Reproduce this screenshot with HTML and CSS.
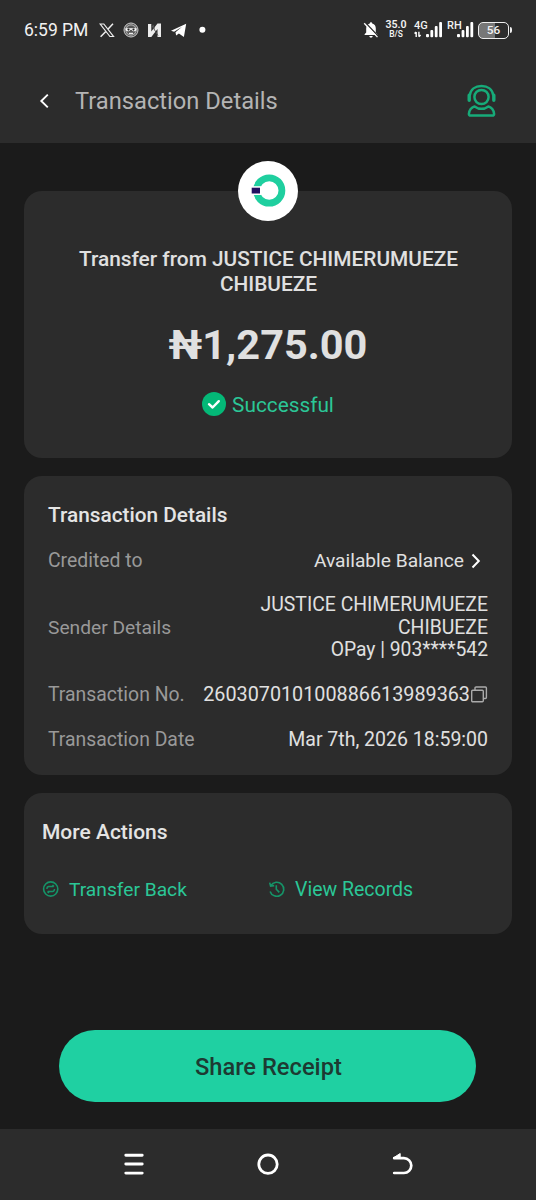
FILE: index.html
```html
<!DOCTYPE html>
<html lang="en">
<head>
<meta charset="utf-8">
<title>Transaction Details</title>
<link rel="stylesheet" href="styles.css">
</head>
<body>
<div class="screen">
  <div class="status">
    <span class="clock">6:59 PM</span>
    <svg class="status-icons" width="110" height="20" viewBox="0 0 110 20">
      <g fill="none" stroke="#eee" stroke-width="1.2">
        <path d="M1.2 4H4.8L14.5 16.5H10.9Z"/>
        <path d="M14 3.8L8.9 9.2M6.8 11.4L1.6 16.8" stroke-width="1.5"/>
      </g>
      <circle cx="32" cy="10" r="7" fill="#555" stroke="#ccc" stroke-width="1"/>
      <circle cx="32" cy="10" r="5.2" fill="none" stroke="#aaa" stroke-width="1.2"/>
      <path d="M26.5 8.2H37.5V9.2C37.5 11.5 33.5 12.2 32.7 9.7H31.3C30.5 12.2 26.5 11.5 26.5 9.2Z" fill="#fff"/>
      <circle cx="29.5" cy="9.6" r="1.1" fill="#222"/><circle cx="34.5" cy="9.6" r="1.1" fill="#222"/>
      <path d="M30 13.4H34" stroke="#eee" stroke-width="1.3"/>
      <path d="M49 4H52.3V11.5L58.5 3.5H62V17H58.5V9L52.3 17H49Z" fill="#ececec"/>
      <path d="M52.5 5L59 15.5M54 4.8L55.5 8.5" stroke="#555" stroke-width="1"/>
      <path d="M72 10.8L87.2 3.7L84.9 17L79.9 13.6L77.1 15.6L76.5 12.2L83.1 6.8L75.1 11.8Z" fill="#fff"/>
      <circle cx="103.4" cy="9.8" r="3" fill="#fff"/>
    </svg>
    <svg class="bell" width="16" height="18" viewBox="0 0 16 18">
      <path d="M8 1.2C8.8 1.2 9.2 1.8 9.2 2.6C11.7 3.3 12.8 5.2 12.8 7.6V11.5L14.4 13.2V14H1.6V13.2L3.2 11.5V7.6C3.2 5.2 4.3 3.3 6.8 2.6C6.8 1.8 7.2 1.2 8 1.2Z" fill="#fff"/>
      <path d="M6.3 15H9.7C9.5 17.2 6.5 17.2 6.3 15Z" fill="#fff"/>
      <path d="M2.2 1.4L15.3 15.2" stroke="#2c2c2c" stroke-width="1.4"/>
      <path d="M1.2 2.2L14.5 16.1" stroke="#fff" stroke-width="1.3"/>
    </svg>
    <div class="speed"><b>35.0</b><i>B/S</i></div>
    <div class="sim sim-a"><span>4G</span>
      <svg width="29" height="18" viewBox="0 0 29 18"><g fill="#fff"><rect x="12" y="13" width="3" height="3.2" rx="1"/><rect x="16.4" y="9" width="2.8" height="7.2" rx="1"/><rect x="20.8" y="5" width="2.8" height="11.2" rx="1"/><rect x="25.2" y="1" width="2.8" height="15.2" rx="1"/></g><path d="M2.2 16V11M.5 12.6L2.2 10.9M4.9 10.8V15.8M4.9 15.8L6.6 14.1" stroke="#fff" stroke-width="1.4" fill="none"/></svg>
    </div>
    <div class="sim sim-b"><span>RH</span>
      <svg width="29" height="18" viewBox="0 0 29 18"><g fill="#fff"><rect x="10" y="13" width="3" height="3.2" rx="1"/><rect x="14.6" y="9" width="2.8" height="7.2" rx="1"/><rect x="19" y="5" width="2.8" height="11.2" rx="1"/><rect x="23.4" y="1" width="2.8" height="15.2" rx="1"/></g></svg>
    </div>
    <div class="battery"><span>56</span></div>
    <div class="battery-tip"></div>
  </div>

  <header class="header">
    <svg class="back" width="10" height="16" viewBox="0 0 10 16"><path d="M8.8 1.6L2.3 8L8.8 14.4" fill="none" stroke="#fff" stroke-width="1.9"/></svg>
    <h1>Transaction Details</h1>
    <svg class="support" width="30" height="34" viewBox="0 0 30 34" fill="none" stroke="#17ab79" stroke-width="2.5">
      <circle cx="14.5" cy="13" r="7.1"/>
      <path d="M2.7 11.5C3.5 5.5 8.3 2 14.5 2S25.5 5.5 26.3 11.5"/>
      <path d="M2.2 11.2V16.2M26.8 11.2V16.2" stroke-width="3.4" stroke-linecap="round"/>
      <path d="M7.6 22.4C12 25.5 17 25.5 21.4 22.4C25.3 23.6 26.7 26.5 27.1 29.8C27.2 31 26.5 31.6 25.5 31.6H3.5C2.5 31.6 1.8 31 1.9 29.8C2.3 26.5 3.7 23.6 7.6 22.4Z" stroke-linejoin="round"/>
    </svg>
  </header>

  <main class="content">
    <section class="card summary">
      <div class="logo">
        <svg width="60" height="60" viewBox="0 0 60 60"><circle cx="31.2" cy="29.5" r="12.7" fill="none" stroke="#1fcf9f" stroke-width="6.8"/><path d="M12 25.2H23.2V34H12Z" fill="#fff"/><rect x="13.7" y="26.7" width="8.3" height="5.8" fill="#210f60"/></svg>
      </div>
      <p class="from">Transfer from JUSTICE CHIMERUMUEZE CHIBUEZE</p>
      <p class="amount">₦1,275.00</p>
      <p class="state"><svg width="24" height="24" viewBox="0 0 24 24"><circle cx="12" cy="12" r="12" fill="#04b877"/><path d="M7 12.2L10.6 15.5L16.8 9.2" fill="none" stroke="#fff" stroke-width="2.4" stroke-linecap="round" stroke-linejoin="round"/></svg><span>Successful</span></p>
    </section>

    <section class="card details">
      <h2>Transaction Details</h2>
      <dl>
        <div class="row"><dt>Credited to</dt><dd class="credited">Available Balance<svg width="10" height="16" viewBox="0 0 10 16"><path d="M1.5 1.5L7.8 8L1.5 14.5" fill="none" stroke="#fff" stroke-width="2"/></svg></dd></div>
        <div class="row"><dt class="sender">Sender Details</dt><dd>JUSTICE CHIMERUMUEZE<br>CHIBUEZE<br><span class="account">OPay | 903****542</span></dd></div>
        <div class="row"><dt>Transaction No.</dt><dd class="number">260307010100886613989363<svg width="18" height="18" viewBox="0 0 18 18" fill="none" stroke="#aaa" stroke-width="1.4"><rect x="1.7" y="4.3" width="11.6" height="11.4" rx="1"/><path d="M5 4V1.9Q5 1 6 1H15.4Q16.4 1 16.4 2V11.5Q16.4 12.5 15.4 12.5H13.5"/></svg></dd></div>
        <div class="row"><dt>Transaction Date</dt><dd class="date">Mar 7th, 2026 18:59:00</dd></div>
      </dl>
    </section>

    <section class="card actions">
      <h2>More Actions</h2>
      <div class="links">
        <a class="transfer"><svg width="17" height="17" viewBox="0 0 17 17" fill="none" stroke="#159468" stroke-width="1.6"><circle cx="8.7" cy="8" r="7.1"/><path d="M4.9 7.9Q4.9 5.5 6.9 5.5H11.6M10.5 4L12 5.5M12.5 8.1Q12.5 10.5 10.5 10.5H5.8M6.9 12L5.4 10.5" stroke-width="1.4"/></svg>Transfer Back</a>
        <a><svg width="17" height="17" viewBox="0 0 17 17" fill="none" stroke="#159468" stroke-width="1.6"><path d="M2.8 4.6A7 7 0 1 1 2.1 10.4M1.7 1.6L2.6 5.1L6.2 4.6M8.3 4.2V8.2L11.3 11.4"/></svg>View Records</a>
      </div>
    </section>
  </main>

  <button class="share">Share Receipt</button>

  <nav class="nav">
    <svg width="22" height="24" viewBox="0 0 22 24"><path d="M2.8 3.2H19.2M2.8 12H19.2M2.8 21.1H19.2" stroke="#fff" stroke-width="2.9" stroke-linecap="round"/></svg>
    <svg width="22" height="24" viewBox="0 0 22 24"><circle cx="11" cy="12.2" r="9.2" fill="none" stroke="#fff" stroke-width="2.8"/></svg>
    <svg width="22" height="24" viewBox="0 0 22 24"><path d="M3.2 6.2H12.9A7.4 7.4 0 0 1 12.9 21H3.2" fill="none" stroke="#fff" stroke-width="2.7" stroke-linecap="round"/><path d="M2.1 6L9.2 1.5V6Z" fill="#fff" stroke="#fff" stroke-width="1" stroke-linejoin="round"/></svg>
  </nav>
</div>
</body>
</html>
```

FILE: styles.css
```css
* { box-sizing: border-box; }
body, h1, h2, p, dl, dd { margin: 0; }
body { background: #1b1b1b; font-family: Roboto, sans-serif; }
svg { display: block; flex: none; }

.screen { width: 536px; height: 1200px; display: flex; flex-direction: column; }

.status { height: 60px; flex: none; background: #2c2c2c; display: flex; align-items: center; padding: 0 24px; color: #f2f2f2; }
.clock { font-size: 17.5px; width: 75px; white-space: nowrap; }
.bell { margin: 0 5px 0 154px; }
.speed { flex: none; width: 24px; display: flex; flex-direction: column; align-items: center; margin-top: -3px; }
.speed b { font-size: 10.6px; line-height: 10px; font-weight: 600; }
.speed i { font-size: 8.4px; line-height: 8px; font-weight: 600; font-style: normal; }
.sim { flex: none; display: grid; height: 18px; width: 29px; }
.sim > * { grid-area: 1 / 1; }
.sim span { font-size: 11px; line-height: 10px; font-weight: 500; }
.sim-a { margin-left: 6px; }
.sim-b { margin-left: 4px; }
.battery { flex: none; width: 31px; height: 17px; margin-left: 2px; border: 1.5px solid #eee; border-radius: 5px; background: linear-gradient(90deg, #777 56%, #2c2c2c 56%); text-align: center; font-size: 11.8px; line-height: 15px; font-weight: 500; }
.battery-tip { flex: none; width: 2px; height: 6px; margin-left: 1px; background: #eee; border-radius: 0 2px 2px 0; }

.header { height: 83px; flex: none; background: #2c2c2c; display: flex; align-items: center; padding: 0 39px 2px; }
.header h1 { font-size: 23.7px; line-height: 28px; font-weight: 400; color: #b4b4b4; margin-left: 26px; flex: 1; }

.content { padding: 48px 24px 0; display: flex; flex-direction: column; gap: 18px; }
.card { background: #2c2c2c; border-radius: 18px; }
.summary { height: 267px; position: relative; display: flex; flex-direction: column; align-items: center; padding-top: 56px; }
.logo { position: absolute; top: -30px; left: 214px; width: 60px; height: 60px; border-radius: 50%; background: #fff; }
.from { width: 401px; padding-left: 1px; text-align: center; font-size: 20.85px; line-height: 24.5px; font-weight: 500; color: #e0e0e0; }
.amount { font-size: 41.5px; line-height: 48px; font-weight: 700; color: #e0e0e0; margin-top: 25px; }
.state { display: flex; align-items: center; gap: 6px; margin-top: 23px; font-size: 20.8px; line-height: 24px; color: #2bc797; }
.state svg { margin-top: -1px; }
.state span { padding-top: 1px; }

h2 { font-size: 20.8px; line-height: 24px; font-weight: 500; color: #e4e4e4; }
.details { height: 299px; padding: 27px 24px 0; }
dl { display: flex; flex-direction: column; gap: 22.3px; margin-top: 22.5px; font-size: 19.4px; line-height: 22.5px; }
.row { display: flex; justify-content: space-between; align-items: center; white-space: nowrap; }
dt { color: #999; }
dd { color: #e0e0e0; text-align: right; }
.sender { font-size: 19.2px; }
.account { font-size: 19.3px; }
.credited { display: flex; align-items: center; gap: 7px; padding-right: 7px; font-size: 19.2px; }
.number { display: flex; align-items: center; font-size: 19.8px; }
.date { font-size: 19.5px; }

.actions { height: 141px; padding: 27px 18px 0; }
.actions h2 { font-size: 21px; }
.links { display: grid; grid-template-columns: 226px 226px; margin-top: 33.5px; }
.links a { display: flex; align-items: center; gap: 10px; font-size: 19.5px; line-height: 24px; color: #2bc797; }
.links .transfer { font-size: 19.2px; }

.share { width: 417px; height: 72px; margin: 96px 0 0 59.4px; flex: none; border: 0; border-radius: 36px; background: #1fd0a2; color: #1d3a32; font: 500 23.7px/28px Roboto, sans-serif; padding: 2px 0 0 1px; }

.nav { flex: none; height: 71px; margin-top: auto; background: #2c2c2c; display: flex; justify-content: space-between; align-items: center; padding: 0 123px 2px; }
```
